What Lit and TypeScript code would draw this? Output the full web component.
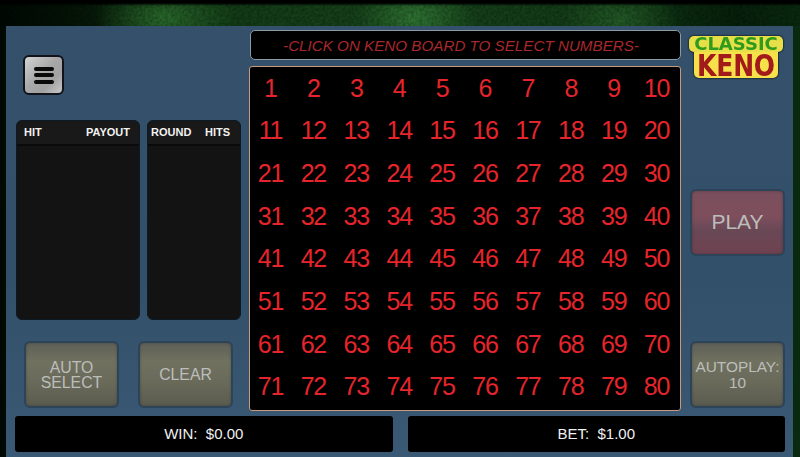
import { LitElement, html, css } from "lit";
import { customElement } from "lit/decorators.js";

@customElement("app-root")
export class AppRoot extends LitElement {
  static styles = css`
    :host { display: block; width: 800px; height: 457px; overflow: hidden; font-family: "Liberation Sans", Arial, sans-serif; }
    * { box-sizing: border-box; }
    .page {
      position: relative;
      width: 800px; height: 457px; padding: 26px 7px 0 6px; display: flex;
      background:
        linear-gradient(180deg, #000 0, #000 3px, rgba(0,0,0,0) 6px),
        radial-gradient(ellipse 60px 40px at 415px 18px, #2f7433 0, rgba(40,100,40,0) 100%),
        radial-gradient(ellipse 70px 40px at 165px 18px, #2a6a2c 0, rgba(40,100,40,0) 100%),
        radial-gradient(ellipse 60px 40px at 620px 20px, #235a26 0, rgba(40,100,40,0) 100%),
        linear-gradient(90deg, #010803 0, #041206 8%, #123c16 28%, #16421a 50%, #123a16 75%, #06200b 92%, #0a2a10 100%);
    }
    .noise { position: absolute; left: 0; top: 3px; width: 800px; height: 23px; opacity: .35; }
    .panel {
      position: relative;
      width: 787px; height: 431px; display: grid;
      grid-template-columns: 243px 432px 112px;
      grid-template-rows: 390px 41px;
      background: linear-gradient(180deg, #34506a 0, #33506a 60%, #3a5974 100%);
    }
    .left { display: flex; flex-direction: column; padding: 29px 0 0 10px; }
    .menu {
      width: 41px; height: 40px; margin-left: 7px; border: 2px solid #10141a; border-radius: 6px;
      background: linear-gradient(135deg, #d4d4d4 0, #a8a8a8 45%, #a2a2a2 70%, #c8c8c8 100%);
      display: flex; flex-direction: column; align-items: center; justify-content: center; gap: 2.5px;
    }
    .menu i { display: block; width: 20px; height: 4px; border-radius: 2px; background: #0a0a0a; }
    .tables { display: flex; gap: 7px; margin-top: 25px; }
    .table { height: 200px; background: #131313; border: 1px solid #0c1a26; border-radius: 6px; overflow: hidden; }
    .table.hit { width: 124px; }
    .table.round { width: 94px; }
    .thead {
      height: 25px; display: flex; justify-content: space-between; align-items: center;
      padding: 0 9px 2px 7px; border-bottom: 2px solid #0a0a0a; background: #191919;
      color: #f2f2f2; font-size: 11px; font-weight: 700;
    }
    .table.round .thead { padding: 0 10px 2px 3px; }
    .btns { display: flex; gap: 19px; margin: 21px 0 0 8px; }
    .btn {
      width: 95px; height: 67px; display: flex; align-items: center; justify-content: center; text-align: center;
      border: 2px solid #2d4358; border-radius: 6px; color: #bcbebb; font-size: 15.8px; line-height: 15px;
      background: linear-gradient(180deg, #5f6058 0, #70715f 30%, #69695a 65%, #5a5b4f 100%);
      box-shadow: inset 0 0 3px rgba(0,0,0,.25);
    }
    .center { display: flex; flex-direction: column; padding-top: 4px; }
    .msg {
      width: 431px; height: 30px; margin-left: 1px; background: #000; border: 1.5px solid #8a9ba6; border-radius: 5px;
      display: flex; align-items: center; justify-content: center;
      color: #a8282c; font-size: 15.2px; font-style: italic; padding-right: 9px;
    }
    .board {
      width: 432px; height: 345px; margin-top: 6px; background: #000; border: 1.5px solid #c79a7c; border-radius: 3px;
      display: grid; grid-template-columns: repeat(10, 1fr); grid-template-rows: repeat(8, 1fr);
      padding: 0 1px 2px 0;
    }
    .cell {
      display: flex; align-items: center; justify-content: center; padding-right: 2px;
      color: #e5252b; font-family: "Liberation Sans", Arial, sans-serif; font-size: 25px; line-height: 1;
      letter-spacing: -1.2px; font-weight: 400;
    }
    .right { display: flex; flex-direction: column; padding: 10px 0 0 9px; }
    .logo {
      width: 94px; height: 42px; margin-left: -1px; display: flex; flex-direction: column; align-items: center;
      font-family: "DejaVu Sans", sans-serif; font-weight: 700; line-height: 1;
      filter: drop-shadow(0 0 1px #000);
    }
    .classic {
      width: 94px; height: 16px; background: #e6df48; border-radius: 5px; color: #2f9a1c; font-size: 18px;
      display: flex; align-items: center; justify-content: center; letter-spacing: 0;
    }
    .keno {
      width: 84px; height: 26px; background: #f7e14a; border-radius: 0 0 5px 5px; color: #a31a1a; font-size: 25px;
      display: flex; align-items: center; justify-content: center; letter-spacing: -.2px;
    }
    .keno span { display: block; transform: scaleY(1.2); }
    .right .btn { margin-left: 0; }
    .play {
      margin-top: 111px; padding-bottom: 2px; font-size: 21px;
      background: linear-gradient(180deg, #7a4f5d 0, #7e4e5c 40%, #694856 62%, #6f4250 100%);
    }
    .right .auto { margin-top: 85px; font-size: 15.4px; line-height: 16px; }
    .foot { grid-column: 1 / -1; display: flex; gap: 15px; padding: 0 8px 5px 9px; margin-top: 0; }
    .bar {
      flex: 1; height: 36px; padding-bottom: 1px; background: #000; border-radius: 3px; color: #f0f0f0; font-size: 15px;
      display: flex; align-items: center; justify-content: center; white-space: pre;
    }
  `;

  render() {
    const nums = Array.from({ length: 80 }, (_, i) => i + 1);
    return html`
      <div class="page">
        <svg class="noise" viewBox="0 0 800 23" preserveAspectRatio="none" aria-hidden="true">
          <filter id="n"><feTurbulence type="fractalNoise" baseFrequency="0.35" numOctaves="2" seed="4" />
            <feColorMatrix values="0 0 0 0 0  0 0 0 0 0  0 0 0 0 0  1.6 0 0 0 -0.5" /></filter>
          <rect width="800" height="23" filter="url(#n)" />
        </svg>
        <div class="panel">
          <div class="left">
            <div class="menu"><i></i><i></i><i></i></div>
            <div class="tables">
              <div class="table hit"><div class="thead"><span>HIT</span><span>PAYOUT</span></div></div>
              <div class="table round"><div class="thead"><span>ROUND</span><span>HITS</span></div></div>
            </div>
            <div class="btns">
              <div class="btn">AUTO<br />SELECT</div>
              <div class="btn">CLEAR</div>
            </div>
          </div>
          <div class="center">
            <div class="msg">-CLICK ON KENO BOARD TO SELECT NUMBERS-</div>
            <div class="board">${nums.map((n) => html`<div class="cell">${n}</div>`)}</div>
          </div>
          <div class="right">
            <div class="logo">
              <div class="classic">CLASSIC</div>
              <div class="keno"><span>KENO</span></div>
            </div>
            <div class="btn play">PLAY</div>
            <div class="btn auto">AUTOPLAY:<br />10</div>
          </div>
          <div class="foot">
            <div class="bar">WIN:  $0.00</div>
            <div class="bar">BET:  $1.00</div>
          </div>
        </div>
      </div>
    `;
  }
}
